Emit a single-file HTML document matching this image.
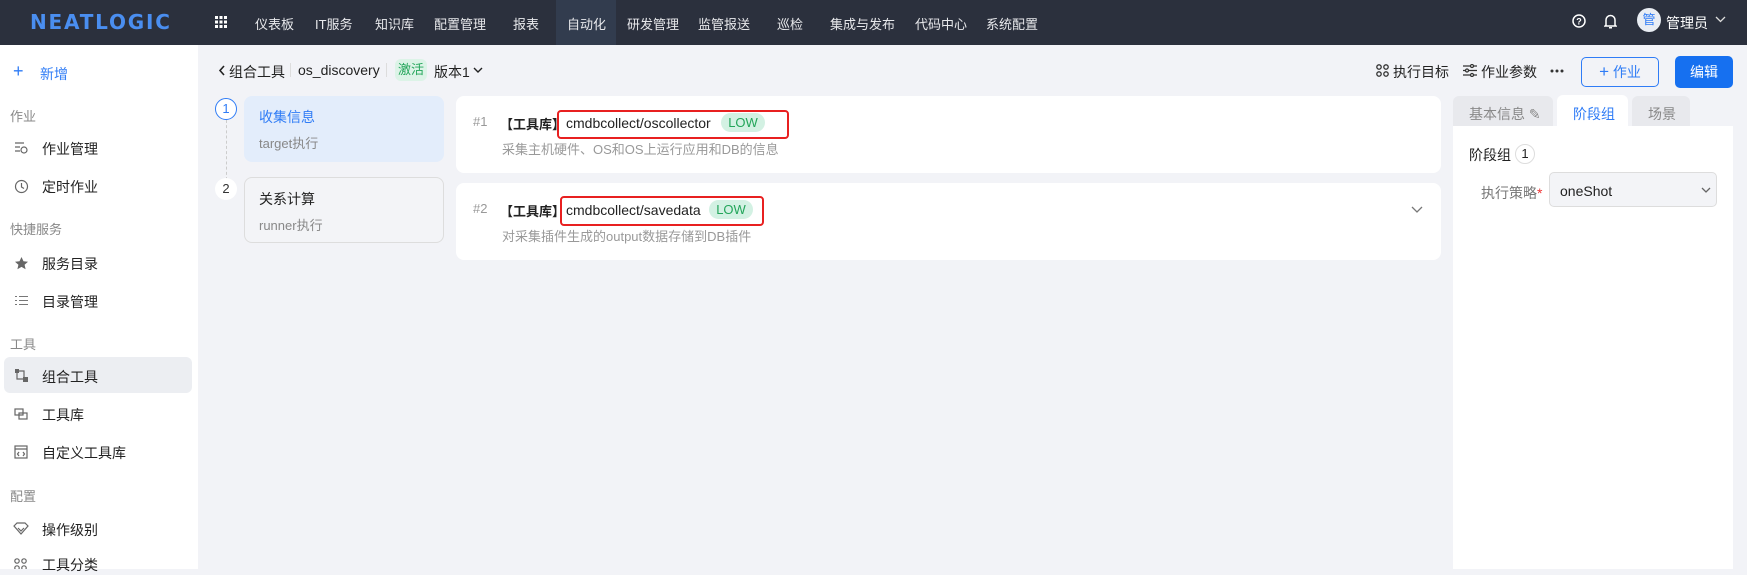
<!DOCTYPE html>
<html><head><meta charset="utf-8"><style>
*{box-sizing:border-box;margin:0;padding:0}
body{width:1747px;height:569px;overflow:hidden;font-family:"Liberation Sans","Noto Sans CJK SC",sans-serif;background:#f2f3f7;position:relative;color:#222;font-size:14px}
.a{position:absolute;white-space:nowrap}
.hdr{position:absolute;left:0;top:0;width:1747px;height:45px;background:#2b303d}
.nav{color:#e8e9ec;font-size:13px;top:14px}
.side{position:absolute;left:0;top:45px;width:198px;height:524px;background:#fff}
.grp{color:#888;font-size:13px;left:10px}
.it{left:42px;font-size:14px;color:#222}
</style></head><body>
<div class="hdr"></div>
<div class="a" style="left:30px;top:10px;font-size:20px;font-weight:bold;color:#4a8ef0;letter-spacing:1.8px;font-family:'DejaVu Sans',sans-serif">NEATLOGIC</div>
<svg class="a" style="left:215px;top:16px" width="12" height="12" fill="#fff"><rect x="0" y="0" width="3" height="3"/><rect x="4.5" y="0" width="3" height="3"/><rect x="9" y="0" width="3" height="3"/><rect x="0" y="4.5" width="3" height="3"/><rect x="4.5" y="4.5" width="3" height="3"/><rect x="9" y="4.5" width="3" height="3"/><rect x="0" y="9" width="3" height="3"/><rect x="4.5" y="9" width="3" height="3"/><rect x="9" y="9" width="3" height="3"/></svg>
<div class="a" style="left:556px;top:0;width:60px;height:45px;background:#323c4e"></div>
<div class="a nav" style="left:255px">仪表板</div>
<div class="a nav" style="left:315px">IT服务</div>
<div class="a nav" style="left:375px">知识库</div>
<div class="a nav" style="left:434px">配置管理</div>
<div class="a nav" style="left:513px">报表</div>
<div class="a nav" style="left:567px">自动化</div>
<div class="a nav" style="left:627px">研发管理</div>
<div class="a nav" style="left:698px">监管报送</div>
<div class="a nav" style="left:777px">巡检</div>
<div class="a nav" style="left:830px">集成与发布</div>
<div class="a nav" style="left:915px">代码中心</div>
<div class="a nav" style="left:986px">系统配置</div>
<svg class="a" style="left:1572px;top:14px" width="14" height="14"><circle cx="7" cy="7" r="6" fill="none" stroke="#fff" stroke-width="1.5"/><text x="7" y="10.5" font-size="9" fill="#fff" text-anchor="middle" font-weight="bold">?</text></svg>
<svg class="a" style="left:1604px;top:14px" width="13" height="15"><path d="M2 11V6a4.5 4.5 0 0 1 9 0v5l1 1H1z" fill="none" stroke="#fff" stroke-width="1.5"/><rect x="5" y="13" width="3" height="1.5" fill="#fff"/></svg>
<div class="a" style="left:1637px;top:8px;width:24px;height:24px;border-radius:50%;background:#e9edf3;color:#2f7cf6;font-size:13px;text-align:center;line-height:24px">管</div>
<div class="a" style="left:1666px;top:13px;color:#fff;font-size:14px">管理员</div>
<svg class="a" style="left:1715px;top:16px" width="11" height="8"><path d="M1 1l4.5 4.5L10 1" fill="none" stroke="#ddd" stroke-width="1.3"/></svg>

<div class="side"></div>
<div class="a" style="left:13px;top:61px;color:#2f7cf6;font-size:18px">+</div>
<div class="a" style="left:40px;top:64px;color:#2f7cf6;font-size:14px">新增</div>
<div class="a grp" style="top:106px">作业</div>
<div class="a it" style="top:139px">作业管理</div>
<div class="a it" style="top:177px">定时作业</div>
<div class="a grp" style="top:219px">快捷服务</div>
<div class="a it" style="top:254px">服务目录</div>
<div class="a it" style="top:292px">目录管理</div>
<div class="a grp" style="top:334px">工具</div>
<div class="a" style="left:4px;top:357px;width:188px;height:36px;background:#eceef2;border-radius:6px"></div>
<div class="a it" style="top:367px">组合工具</div>
<div class="a it" style="top:405px">工具库</div>
<div class="a it" style="top:443px">自定义工具库</div>
<div class="a grp" style="top:486px">配置</div>
<div class="a it" style="top:520px">操作级别</div>
<div class="a it" style="top:555px">工具分类</div>
<svg class="a" style="left:14px;top:141px" width="14" height="14" stroke="#666" fill="none" stroke-width="1.2"><path d="M1 2h9M1 6h5M1 10h5"/><circle cx="10" cy="9" r="3"/></svg>
<svg class="a" style="left:14px;top:179px" width="15" height="15" stroke="#666" fill="none" stroke-width="1.2"><circle cx="7.5" cy="7.5" r="6"/><path d="M7.5 4v4l2.5 1.5"/></svg>
<svg class="a" style="left:14px;top:256px" width="15" height="14"><path d="M7.5 1l2 4.3 4.5.5-3.4 3 1 4.5-4.1-2.4-4.1 2.4 1-4.5L1 5.8l4.5-.5z" fill="#666"/></svg>
<svg class="a" style="left:15px;top:295px" width="13" height="11" stroke="#777" stroke-width="1.1"><path d="M0 1.5h2M4 1.5h9M0 5.5h2M4 5.5h9M0 9.5h2M4 9.5h9"/></svg>
<svg class="a" style="left:15px;top:369px" width="13" height="13" fill="#666"><rect x="0" y="0" width="4" height="4"/><rect x="8" y="8" width="5" height="5"/><path d="M2 4v6h6M4 2h5v6" fill="none" stroke="#666" stroke-width="1.2"/></svg>
<svg class="a" style="left:14px;top:408px" width="14" height="12" stroke="#666" fill="none" stroke-width="1.2"><rect x="1" y="1" width="8" height="6"/><rect x="5" y="5" width="8" height="6"/></svg>
<svg class="a" style="left:14px;top:445px" width="14" height="14" stroke="#666" fill="none" stroke-width="1.2"><rect x="1" y="1" width="12" height="12"/><path d="M1 4h12M5 7l-1.5 2L5 11M9 7l1.5 2L9 11"/></svg>
<svg class="a" style="left:13px;top:522px" width="16" height="14" stroke="#666" fill="none" stroke-width="1.2"><path d="M1 4l3-3h8l3 3-7 8z"/><path d="M5 6l3 3 3-3"/></svg>
<svg class="a" style="left:14px;top:558px" width="14" height="11" stroke="#666" fill="none" stroke-width="1.2"><circle cx="3" cy="3" r="2.2"/><circle cx="10" cy="3" r="2.2"/><circle cx="3" cy="10" r="2.2"/><circle cx="10" cy="10" r="2.2"/></svg>

<!-- breadcrumb -->
<svg class="a" style="left:218px;top:65px" width="8" height="11"><path d="M6 1L2 5.5 6 10" fill="none" stroke="#222" stroke-width="1.6"/></svg>
<div class="a" style="left:229px;top:62px">组合工具</div>
<div class="a" style="left:290px;top:63px;width:1px;height:14px;background:#ddd"></div>
<div class="a" style="left:298px;top:62px">os_discovery</div>
<div class="a" style="left:386px;top:63px;width:1px;height:14px;background:#ddd"></div>
<div class="a" style="left:395px;top:59px;width:32px;height:22px;background:#dcf3e7;border-radius:6px;color:#23a55a;font-size:13px;text-align:center;line-height:22px">激活</div>
<div class="a" style="left:434px;top:62px">版本1</div>
<svg class="a" style="left:473px;top:67px" width="10" height="7"><path d="M1 1l4 4 4-4" fill="none" stroke="#222" stroke-width="1.4"/></svg>

<svg class="a" style="left:1376px;top:64px" width="13" height="13" stroke="#333" fill="none" stroke-width="1.3"><circle cx="3" cy="3" r="2.2"/><circle cx="10" cy="3" r="2.2"/><circle cx="3" cy="10" r="2.2"/><circle cx="10" cy="10" r="2.2"/></svg>
<div class="a" style="left:1393px;top:62px">执行目标</div>
<svg class="a" style="left:1463px;top:64px" width="14" height="13" stroke="#333" stroke-width="1.3"><path d="M0 2h14M0 6.5h14M0 11h14"/><circle cx="9" cy="2" r="1.5" fill="#fff"/><circle cx="4" cy="6.5" r="1.5" fill="#fff"/><circle cx="9" cy="11" r="1.5" fill="#fff"/></svg>
<div class="a" style="left:1481px;top:62px">作业参数</div>
<svg class="a" style="left:1550px;top:69px" width="14" height="4" fill="#333"><circle cx="2" cy="2" r="1.5"/><circle cx="7" cy="2" r="1.5"/><circle cx="12" cy="2" r="1.5"/></svg>
<div class="a" style="left:1581px;top:57px;width:78px;height:30px;border:1px solid #2f7cf6;border-radius:5px;color:#2f7cf6;text-align:center;line-height:28px"><span style="font-size:17px">+</span> 作业</div>
<div class="a" style="left:1675px;top:56px;width:58px;height:32px;background:#1670f0;border-radius:5px;color:#fff;text-align:center;line-height:32px">编辑</div>

<!-- steps -->
<div class="a" style="left:226px;top:120px;height:60px;border-left:1px dashed #ccc"></div>
<div class="a" style="left:215px;top:98px;width:22px;height:22px;border-radius:50%;border:1px solid #2f7cf6;background:#fff;color:#2f7cf6;text-align:center;line-height:20px;font-size:13px">1</div>
<div class="a" style="left:215px;top:178px;width:22px;height:22px;border-radius:50%;background:#fff;color:#333;text-align:center;line-height:22px;font-size:13px">2</div>
<div class="a" style="left:244px;top:96px;width:200px;height:66px;background:#e3edfb;border-radius:8px"></div>
<div class="a" style="left:259px;top:107px;color:#2f7cf6">收集信息</div>
<div class="a" style="left:259px;top:133px;color:#888;font-size:13px">target执行</div>
<div class="a" style="left:244px;top:177px;width:200px;height:66px;background:#f3f4f7;border:1px solid #ddd;border-radius:8px"></div>
<div class="a" style="left:259px;top:189px">关系计算</div>
<div class="a" style="left:259px;top:215px;color:#888;font-size:13px">runner执行</div>

<div class="a" style="left:456px;top:96px;width:985px;height:77px;background:#fff;border-radius:8px"></div>
<div class="a" style="left:473px;top:114px;color:#999;font-size:13px">#1</div>
<div class="a" style="left:500px;top:114px;font-weight:bold;font-size:13px">【工具库】</div>
<div class="a" style="left:557px;top:110px;width:232px;height:29px;border:2px solid #e82020;border-radius:4px"></div>
<div class="a" style="left:566px;top:115px">cmdbcollect/oscollector</div>
<div class="a" style="left:721px;top:113px;width:44px;height:19px;background:#d3f1e3;border-radius:10px;color:#23a55a;font-size:13px;text-align:center;line-height:19px">LOW</div>
<div class="a" style="left:502px;top:139px;color:#999;font-size:13px">采集主机硬件、OS和OS上运行应用和DB的信息</div>

<div class="a" style="left:456px;top:183px;width:985px;height:77px;background:#fff;border-radius:8px"></div>
<div class="a" style="left:473px;top:201px;color:#999;font-size:13px">#2</div>
<div class="a" style="left:500px;top:201px;font-weight:bold;font-size:13px">【工具库】</div>
<div class="a" style="left:560px;top:196px;width:204px;height:30px;border:2px solid #e82020;border-radius:4px"></div>
<div class="a" style="left:566px;top:202px">cmdbcollect/savedata</div>
<div class="a" style="left:709px;top:200px;width:44px;height:19px;background:#d3f1e3;border-radius:10px;color:#23a55a;font-size:13px;text-align:center;line-height:19px">LOW</div>
<div class="a" style="left:502px;top:226px;color:#999;font-size:13px">对采集插件生成的output数据存储到DB插件</div>
<svg class="a" style="left:1411px;top:206px" width="12" height="8"><path d="M1 1l5 5 5-5" fill="none" stroke="#777" stroke-width="1.3"/></svg>

<!-- right panel -->
<div class="a" style="left:1453px;top:96px;width:100px;height:31px;background:#e8e9ed;border-radius:6px 6px 0 0"></div>
<div class="a" style="left:1469px;top:104px;color:#888">基本信息 ✎</div>
<div class="a" style="left:1557px;top:95px;width:71px;height:32px;background:#fff;border-radius:6px 6px 0 0"></div>
<div class="a" style="left:1573px;top:104px;color:#2f7cf6">阶段组</div>
<div class="a" style="left:1632px;top:96px;width:58px;height:31px;background:#e8e9ed;border-radius:6px 6px 0 0"></div>
<div class="a" style="left:1648px;top:104px;color:#888">场景</div>
<div class="a" style="left:1453px;top:126px;width:280px;height:443px;background:#fff"></div>
<div class="a" style="left:1469px;top:145px">阶段组</div>
<div class="a" style="left:1515px;top:144px;width:20px;height:20px;border:1px solid #ddd;border-radius:50%;text-align:center;line-height:18px;font-size:13px">1</div>
<div class="a" style="left:1481px;top:183px;color:#777">执行策略<span style="color:#e33">*</span></div>
<div class="a" style="left:1549px;top:172px;width:168px;height:35px;background:#f3f4f7;border:1px solid #ddd;border-radius:5px"></div>
<div class="a" style="left:1560px;top:183px">oneShot</div>
<svg class="a" style="left:1701px;top:187px" width="10" height="7"><path d="M1 1l4 4 4-4" fill="none" stroke="#666" stroke-width="1.3"/></svg>
</body></html>
